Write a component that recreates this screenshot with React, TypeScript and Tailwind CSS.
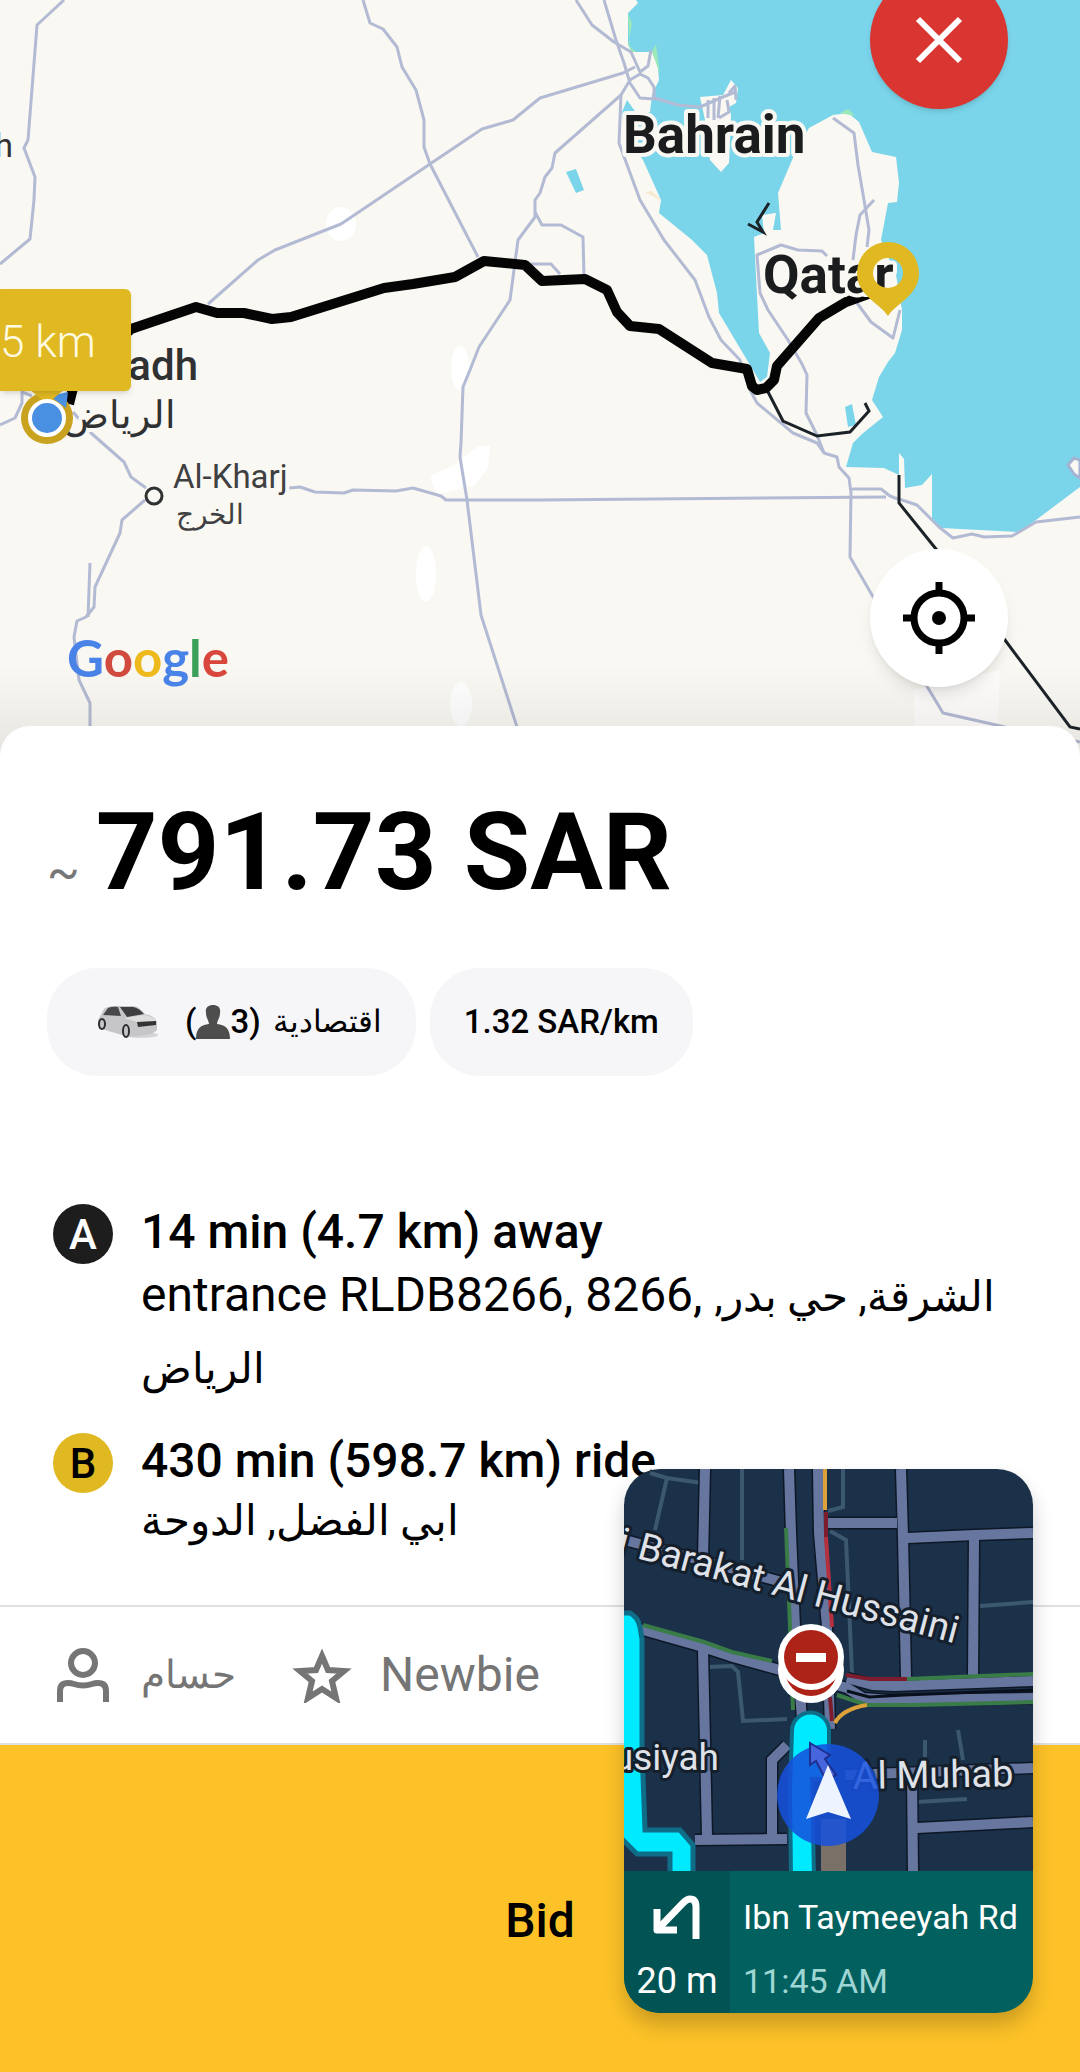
import { clsx } from 'clsx';

const ROADS = [
  'M64 0 37 25 28 140 24 148 35 177 34 200 30 239 0 264',
  'M363 0 370 23 383 29 397 47 402 67 416 90 424 120 424 147 430 164 478 257',
  'M208 304 258 260 275 250 341 224 430 164 482 129 513 120 540 98 623 73 635 67',
  'M576 0 592 25 614 42 631 52 640 72 648 66 651 50',
  'M604 0 616 40 624 63 630 83 640 98 654 99 654 87 648 78 640 74 630 80 621 95 555 153 552 168 545 177 540 193 535 200 535 217 518 240 510 300 479 347 470 370 463 387 461 443 460 457 467 500 481 615 517 727 528 760',
  'M621 95 619 143 640 200 664 240 695 280 709 317 721 340 740 360 750 390 757 403 793 433 817 443 824 453 837 457 839 467 849 478 851 493 850 557 872 595 928 688 943 713 1005 727 1080 742',
  'M535 212 542 225 561 225 583 237 584 277',
  'M525 264 551 264 560 274',
  'M827 256 822 251 798 250 781 245 757 255 760 293 768 310 788 340 802 364 807 375 806 413 817 435 824 453',
  'M833 118 854 133 858 165 864 200 869 230 867 247',
  'M874 200 860 215 856 235 853 260',
  'M857 303 871 322 893 338 900 310',
  'M654 98 678 105 700 107 723 97 735 92',
  'M289 488 300 487 315 492 344 493 353 490 396 491 413 488 441 496 446 500 540 500 886 497',
  'M852 489 881 489 890 496 895 498 905 501 917 505 939 527 953 538 972 534 984 537 1012 536 1036 522 1080 517',
  'M73 412 91 433 124 462 131 477 146 488',
  'M145 500 122 520 120 533 95 587 94 607 86 617 77 621 74 637 79 680 90 703 90 760',
  'M90 563 88 617',
  'M0 425 15 418 22 403 22 392 32 396',
];

const SEA =
  'M636 0 638 3 628 13 628 45 633 52 652 52 657 58 659 80 652 95 650 112 637 114 627 100 622 112 624 135 643 160 661 200 659 213 692 240 707 255 717 293 719 313 747 360 753 370 760 382 767 377 770 353 759 333 754 237 764 233 762 215 776 213 773 230 781 230 778 193 795 153 809 128 833 115 848 113 859 122 872 152 896 157 899 183 897 202 888 203 881 240 896 275 902 310 902 330 895 353 888 362 879 377 872 400 883 417 862 434 853 443 846 467 884 468 899 475 899 453 904 459 905 488 922 485 932 474 932 520 941 528 1019 532 1036 520 1080 487V0Z';

const NAV_ROADS = [
  'M81 0 79 90',
  'M1 71 158 113',
  'M79 181 83 368',
  'M165 0 167 64 171 158 178 250',
  'M194 0 195 64 203 158 206 260',
  'M277 0 279 68 282 208',
  'M204 54 273 54',
  'M283 69 351 66 409 64',
  'M350 69 349 206',
  'M0 156 19 161 79 178 109 188 156 201 223 219 239 229 265 231 409 229',
  'M223 209 249 216 270 217 409 212',
  'M148 368 148 291 163 276',
  'M71 371 163 370',
  'M221 306 409 299',
  'M288 308 289 402',
  'M293 359 409 353',
];

const NAV_LANES = [
  'M118 0V91',
  'M26 4 43 9 78 14M43 9 31 61',
  'M219 0V38L204 42',
  'M206 62 222 71 228 204',
  'M356 137 409 133',
  'M84 198 108 197 114 203 119 252 163 250',
  'M334 261 339 291M301 271V288M293 333 343 330',
];

function RouteMap() {
  return (
    <svg
      viewBox="0 0 1080 760"
      preserveAspectRatio="xMidYMin slice"
      className="absolute inset-0 h-full w-full bg-[#faf8f2] font-['Roboto',sans-serif]"
      role="img"
      aria-label="Route from Riyadh to Qatar"
    >
      <g fill="#fff">
        <ellipse cx="341" cy="224" rx="15" ry="17" />
        <ellipse cx="460" cy="368" rx="9" ry="22" />
        <path d="M430 476 452 466 478 446 490 446 488 468 474 486 436 494Z" />
        <ellipse cx="426" cy="574" rx="10" ry="28" />
        <ellipse cx="461" cy="704" rx="11" ry="22" />
        <path d="M914 690 1000 670 996 760H914Z" opacity=".7" />
      </g>
      <path d={SEA} fill="#7ad5ea" />
      <path d="M628 13 632 24 628 45 636 52 630 52ZM652 52 656 44 658 60 660 74ZM840 113 848 109 855 116Z" fill="#9be8b9" />
      <path d="M645 192 652 191 662 201 656 198Z" fill="#f5ead0" />
      <path d="M700 97 723 95 731 80 738 88 736 103 729 107 731 115 729 163 721 172 710 160 705 120Z" fill="#faf8f2" />
      <path d="M566 172 576 169 584 190 576 193ZM845 407 852 404 856 425 848 427Z" fill="#7ad5ea" />
      <path d="M1068 465 1074 458 1080 460V478L1074 474Z" fill="#faf8f2" stroke="#a5b2d4" strokeWidth="3" />

      <g fill="none" stroke="#b3bad3" strokeWidth="3" strokeLinejoin="round">
        {ROADS.map((d) => (
          <path key={d} d={d} />
        ))}
        <path d="M708 100V118M714 98V120M720 96 718 118M729 93 735 86 736 100M727 100 729 112 719 118" />
      </g>

      <path
        d="M766 388 783 421 817 436 850 432 869 411 865 403M899 475V503L936 549 1005 640 1070 727 1080 729M769 203 757 222 763 232 748 224"
        fill="none"
        stroke="#1c2328"
        strokeWidth="3"
      />
      <path
        d="M69 404 74 384 131 329 196 307 217 313 244 313 272 319 291 317 384 288 413 284 455 277 484 261 525 265 542 281 585 279 607 290 617 312 630 326 659 329 712 363 747 369 752 386 757 390 766 388 774 380 777 366 819 318 846 302 871 293"
        fill="none"
        stroke="#050505"
        strokeWidth="10"
        strokeLinejoin="round"
      />

      <g stroke="#faf8f2" strokeWidth="8" strokeLinejoin="round" paintOrder="stroke">
        <g className="text-[53px] font-bold" fill="#1b1c1e">
          <text x="623" y="153">Bahrain</text>
          <text x="763" y="293">Qatar</text>
        </g>
        <text x="198" y="380" textAnchor="end" className="text-[42px] font-medium" fill="#303133">adh</text>
        <text x="176" y="428" textAnchor="end" className="text-[38px]" fill="#303133">الرياض</text>
        <text x="173" y="488" className="text-[33px]" fill="#3f4042">Al-Kharj</text>
        <text x="244" y="524" textAnchor="end" className="text-[28px]" fill="#3f4042">الخرج</text>
        <text x="13" y="157" textAnchor="end" className="text-[33px]" fill="#303133">h</text>
      </g>
      <circle cx="154" cy="496" r="8" fill="#faf8f2" stroke="#303133" strokeWidth="3" />

      <path
        fillRule="evenodd"
        d="M888 316C880 303 857 296 857 273A31 31 0 0 1 919 273C919 296 896 303 888 316ZM888 258A15 15 0 1 0 888 288 15 15 0 0 0 888 258Z"
        fill="#dfb822"
      />

      <circle cx="47" cy="418" r="26" fill="#c9a21f" />
      <path d="M50 396 68 392 66 408Z" fill="#4a90e2" />
      <path d="M28 388H66L47 404Z" fill="#dfb822" />
      <circle cx="47" cy="418" r="17" fill="#4a90e2" stroke="#fff" strokeWidth="4" />
    </svg>
  );
}

function GoogleLogo() {
  return (
    <div className="absolute bottom-[68px] left-[67px] font-['Lato',sans-serif] text-[51px] leading-[60px] font-bold" aria-label="Google">
      <span className="text-[#4a83e8]">G</span>
      <span className="text-[#d04a3e]">o</span>
      <span className="text-[#edb91c]">o</span>
      <span className="text-[#4a83e8]">g</span>
      <span className="text-[#3ba15a]">l</span>
      <span className="text-[#d9473c]">e</span>
    </div>
  );
}

function CarIcon() {
  return (
    <svg viewBox="0 0 62 36" className="h-9 w-[62px]" aria-hidden="true">
      <ellipse cx="44" cy="31" rx="17" ry="3" fill="#d5d5d7" />
      <path d="M1 16 7 5Q10 2 18 2L36 2Q40 2 43 5L48 10Q58 12 60 18V26Q57 30 48 31L32 33 8 26 1 22Z" fill="#c6c6c8" />
      <path d="M6 11 11 4Q16 2 21 3L24 12Z" fill="#48484a" />
      <path d="M23 3 36 3Q42 4 47 10L30 13Z" fill="#3e3e40" />
      <path d="M27 14 48 11Q57 13 59 17L40 18Z" fill="#dededf" />
      <path d="M40 18 59 17V21L41 23Z" fill="#333335" />
      <ellipse cx="5" cy="20" rx="4" ry="6" fill="#2d2d2f" />
      <ellipse cx="5" cy="20" rx="2" ry="4" fill="#c5c5c7" />
      <ellipse cx="29" cy="27" rx="4" ry="7" fill="#2d2d2f" />
      <ellipse cx="29" cy="27" rx="2" ry="5" fill="#c5c5c7" />
    </svg>
  );
}

function NavMap() {
  return (
    <svg viewBox="0 0 409 402" className="block w-full bg-[#1a3149] font-['Roboto',sans-serif]" role="img" aria-label="Navigation map">
      <g fill="none" stroke="#3c5870" strokeWidth="4">
        {NAV_LANES.map((d) => (
          <path key={d} d={d} />
        ))}
      </g>
      <g fill="none" stroke="#0d1726" strokeWidth="13">
        {NAV_ROADS.map((d) => (
          <path key={d} d={d} />
        ))}
      </g>
      <g fill="none" stroke="#66769e" strokeWidth="10">
        {NAV_ROADS.map((d) => (
          <path key={d} d={d} />
        ))}
      </g>
      <path d="M223 222 245 228 280 226 409 221" fill="none" stroke="#0a101b" strokeWidth="3" />
      <g fill="none" strokeWidth="4">
        <path d="M162 59 166 158 169 241M19 156 80 173 108 183 148 192M283 210 409 205M213 226 243 236 290 236 409 233" stroke="#3a7c47" />
        <path d="M201 0V41" stroke="#dda13a" />
        <path d="M211 254Q218 240 243 236" stroke="#dda13a" />
        <path d="M202 43V68M222 206 246 210 283 210M206 228 208 252" stroke="#7c1c2d" />
        <path d="M202 68 208 158" stroke="#b5303f" />
      </g>
      <path
        d="M-6 144H6Q14 148 16 158L18 170 18 280 21 361H56L69 376V408H46V385H13L-6 366Z"
        fill="#00eaff"
        stroke="#0f6d88"
        strokeWidth="5"
      />
      <path d="M168 262A18 18 0 0 1 205 262V310H188L190 408H167L166 320Z" fill="#00eaff" stroke="#0f6d88" strokeWidth="4" />
      <path d="M197 350H222V402H197Z" fill="#7b7068" />

      <g fill="#dfe2e8" stroke="#151e2b" strokeWidth="6" strokeLinejoin="round" paintOrder="stroke">
        <text x="12" y="89" transform="rotate(15 12 89)" className="text-[38px]">Barakat Al Hussaini</text>
        <text x="-8" y="84" transform="rotate(15 -8 84)" className="text-[38px]">i</text>
        <text x="95" y="301" textAnchor="end" className="text-[37px]">usiyah</text>
        <text x="229" y="320" transform="rotate(-1 229 320)" className="text-[38px]">Al Muhab</text>
      </g>

      <circle cx="204" cy="326" r="51" fill="#1650dc" opacity=".86" />
      <path d="M186 274 206 286 201 290 212 306 202 311 192 292 186 296Z" fill="#4765dc" stroke="#1d2f8f" strokeWidth="2" />
      <path d="M204 296 227 350 204 343 182 350Z" fill="#eef4ff" />

      <circle cx="187" cy="201" r="33" fill="#fff" />
      <circle cx="187" cy="201" r="26" fill="#ad2317" />
      <circle cx="187" cy="188" r="33" fill="#fff" />
      <circle cx="187" cy="188" r="27" fill="#ad2317" />
      <path d="M172 184H202V193H172Z" fill="#fff" />
    </svg>
  );
}

function NavPreview() {
  return (
    <aside className="absolute right-[47px] bottom-[59px] w-[409px] overflow-hidden rounded-[36px] shadow-[0_12px_20px_rgba(0,0,0,0.2)]">
      <NavMap />
      <div className="flex h-[142px] bg-[#02605f] text-white">
        <div className="flex w-[106px] flex-col items-center justify-between bg-[#025354] pt-6 pb-3">
          <svg viewBox="0 0 48 46" className="h-[46px] w-12" fill="none" stroke="currentColor" strokeWidth="7" strokeLinejoin="round" aria-hidden="true">
            <path d="M43 44V12Q43 4 37 4 34 4 30 8L5 34" />
            <path d="M4 14V35H24" />
          </svg>
          <span className="text-[36px] leading-[40px]">20 m</span>
        </div>
        <div className="flex flex-col justify-between pt-6 pb-3 pl-[13px] whitespace-nowrap">
          <span className="text-[34px] leading-[44px]">Ibn Taymeeyah Rd</span>
          <span className="text-[34px] leading-[40px] text-[#9fd6d3]">11:45 AM</span>
        </div>
      </div>
    </aside>
  );
}

interface StopProps {
  marker: string;
  markerClass: string;
  title: string;
  className?: string;
  children: React.ReactNode;
}

function Stop({ marker, markerClass, title, className, children }: StopProps) {
  return (
    <li className={clsx('flex gap-7', className)}>
      <span className={clsx('flex size-[60px] shrink-0 items-center justify-center rounded-full text-[42px] font-medium', markerClass)}>
        {marker}
      </span>
      <div>
        <h2 className="text-[48px] leading-[56px] font-medium">{title}</h2>
        {children}
      </div>
    </li>
  );
}

export default function App() {
  return (
    <main className="relative flex min-h-screen flex-col bg-[#fdc228] font-['Roboto',sans-serif] text-black">
      <section className="relative min-h-[500px] flex-1 overflow-hidden">
        <RouteMap />
        <div className="absolute inset-x-0 bottom-0 h-[90px] bg-linear-to-t from-black/8 to-transparent" />
        <GoogleLogo />
        <div className="absolute top-[289px] left-0 flex h-[102px] w-[131px] items-center rounded-r-md bg-[#dfb822] pt-1 text-[44px] font-light text-[#fffbe0] shadow-md">
          5 km
        </div>
        <button
          type="button"
          aria-label="Close"
          className="absolute -top-[29px] right-[72px] flex size-[138px] items-center justify-center rounded-full bg-[#d93632] text-white shadow-md"
        >
          <svg viewBox="0 0 48 48" className="size-12" stroke="currentColor" strokeWidth="6" aria-hidden="true">
            <path d="M3 3 45 45M45 3 3 45" />
          </svg>
        </button>
        <button
          type="button"
          aria-label="My location"
          className="absolute right-[72px] bottom-[69px] flex size-[138px] items-center justify-center rounded-full bg-white shadow-lg"
        >
          <svg viewBox="0 0 72 72" className="size-[72px]" fill="none" stroke="currentColor" strokeWidth="7" aria-hidden="true">
            <circle cx="36" cy="36" r="25" />
            <circle cx="36" cy="36" r="7" fill="currentColor" stroke="none" />
            <path d="M36 0V11M36 61V72M0 36H11M61 36H72" />
          </svg>
        </button>
      </section>

      <section className="relative -mt-[30px] rounded-t-[30px] bg-white">
        <div className="px-[47px] pt-[72px] pb-[52px]">
          <h1 className="flex items-baseline gap-4 text-[108px] leading-[108px] font-bold">
            <span className="text-[48px] leading-none font-normal text-[#777]">~</span>
            791.73 SAR
          </h1>

          <div className="mt-[62px] flex gap-[14px] text-[33px] font-medium">
            <div className="flex h-[108px] items-center rounded-[50px] bg-[#f6f6f8] pr-[34px] pl-[50px]">
              <CarIcon />
              <span className="ml-[26px] flex items-center">
                (
                <svg viewBox="0 0 34 34" className="size-[34px]" fill="#4d4d4d" aria-label="seats">
                  <path d="M17 0C22 0 25 3 24 8 24 13 21 16 21 19 29 20 34 23 34 34H0C0 23 5 20 13 19 13 16 10 13 10 8 9 3 12 0 17 0Z" />
                </svg>
                3)
              </span>
              <span className="ml-3 text-[31px] font-normal" dir="rtl">اقتصادية</span>
            </div>
            <div className="flex h-[108px] items-center rounded-[50px] bg-[#f6f6f8] px-[34px]">1.32 SAR/km</div>
          </div>

          <ul className="mt-[128px] ml-[6px]">
            <Stop marker="A" markerClass="bg-[#1d1d1d] text-white" title="14 min (4.7 km) away">
              <p className="text-[48px] leading-[70px]">
                entrance RLDB8266, 8266, <bdi className="text-[42px]">الشرقة, حي بدر,</bdi>
                <br />
                <bdi className="text-[42px]">الرياض</bdi>
              </p>
            </Stop>
            <Stop marker="B" markerClass="bg-[#dfb822]" title="430 min (598.7 km) ride" className="mt-[29px]">
              <p className="text-[42px] leading-[64px]">
                <bdi>ابي الفضل, الدوحة</bdi>
              </p>
            </Stop>
          </ul>
        </div>

        <div className="flex h-[140px] items-center border-y-2 border-[#e0e0e0] pl-[57px] text-[48px] text-[#757575]">
          <svg viewBox="0 0 52 54" className="h-[54px] w-[52px]" fill="none" stroke="currentColor" strokeWidth="6" aria-hidden="true">
            <circle cx="26" cy="15" r="12" />
            <path d="M3 54V43Q3 35 11 35 14 35 17 36 26 39 35 36 38 35 41 35 49 35 49 43V54" />
          </svg>
          <span className="ml-8 text-[39px]">حسام</span>
          <svg viewBox="0 0 60 56" className="ml-14 h-14 w-[60px]" fill="none" stroke="currentColor" strokeWidth="6" aria-hidden="true">
            <path d="M30 9 36 23 52 24 40 34 44 51 30 42 16 51 20 34 8 24 24 23Z" />
          </svg>
          <span className="ml-7">Newbie</span>
        </div>
      </section>

      <button type="button" className="h-[327px] bg-[#fdc228] pt-6 text-[48px] font-medium">
        Bid
      </button>

      <NavPreview />
    </main>
  );
}
